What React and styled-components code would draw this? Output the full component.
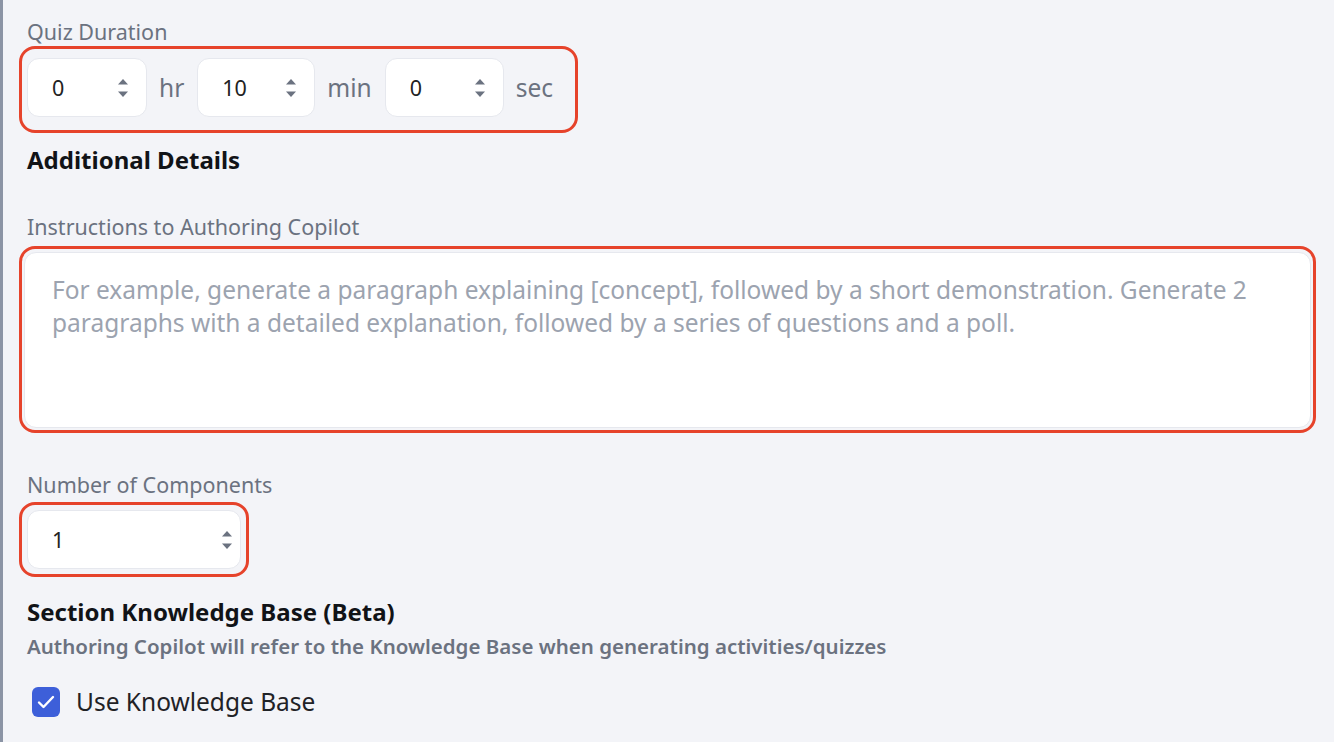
import styled, { createGlobalStyle } from 'styled-components';

const GlobalStyle = createGlobalStyle`
  html, body {
    margin: 0;
    padding: 0;
    background: #f3f4f8;
    font-family: "Noto Sans", "Open Sans", sans-serif;
  }
`;

const Shell = styled.div`
  display: flex;
  min-height: 742px;
  width: 1334px;
  overflow: hidden;
`;

const EdgeStrip = styled.div`
  width: 3px;
  flex: none;
  background: #8b94a5;
`;

const Form = styled.div`
  flex: 1;
  padding: 18px 0 0 24px;
  display: flex;
  flex-direction: column;
  align-items: flex-start;
`;

const Label = styled.div`
  font-size: 21.5px;
  line-height: 28px;
  color: #6b7280;
  margin-top: ${(p) => p.$top || 0}px;
`;

const Heading = styled.div`
  font-size: 24px;
  line-height: 30px;
  font-weight: 700;
  color: #111317;
  margin-top: ${(p) => p.$top || 0}px;
`;

const SubText = styled.div`
  font-size: 20.5px;
  line-height: 26px;
  font-weight: 600;
  color: #6b7280;
  margin-top: 6px;
`;

const Highlight = styled.div`
  margin-left: -8px;
  margin-top: ${(p) => p.$top || 0}px;
  border: 3px solid #e6432b;
  border-radius: 16px;
  padding: ${(p) => p.$pad};
  align-self: ${(p) => (p.$stretch ? 'stretch' : 'flex-start')};
  margin-right: ${(p) => (p.$stretch ? '18px' : '0')};
`;

const DurationRow = styled.div`
  display: flex;
  align-items: center;
`;

const NumberBox = styled.div`
  width: ${(p) => p.$width}px;
  height: 59px;
  box-sizing: border-box;
  background: #fff;
  border: 1px solid #e6e8ee;
  border-radius: 12px;
  display: flex;
  align-items: center;
  justify-content: space-between;
  padding: 0 ${(p) => p.$right}px 0 24px;
  font-size: 21.5px;
  color: #222;
`;

const Unit = styled.span`
  font-size: 24.5px;
  color: #6b7280;
  margin: 0 13px 0 12px;
  &:last-child {
    margin-right: 0;
  }
`;

const TextArea = styled.div`
  height: 176px;
  box-sizing: border-box;
  background: #fff;
  border: 1px solid #e6e8ee;
  border-radius: 12px;
  padding: 20px 27px;
  font-size: 24.5px;
  line-height: 33px;
  color: #9ca3af;
`;

const CheckRow = styled.label`
  display: flex;
  align-items: center;
  gap: 16px;
  margin-top: 26px;
  margin-left: 5px;
  font-size: 24.5px;
  color: #1f2226;
`;

const Box = styled.span`
  width: 28px;
  height: 30px;
  border-radius: 6px;
  background: #3d5fd9;
  display: flex;
  align-items: center;
  justify-content: center;
`;

const Spinner = () => (
  <svg width="12" height="20" viewBox="0 0 12 20">
    <path d="M1 6.5 L6 1 L11 6.5 Z" fill="#6b7280" />
    <path d="M1 13.5 L6 19 L11 13.5 Z" fill="#6b7280" />
  </svg>
);

const NumberInput = ({ value, width = 120, right = 17 }) => (
  <NumberBox $width={width} $right={right}>
    <span>{value}</span>
    <Spinner />
  </NumberBox>
);

export default function App() {
  return (
    <Shell>
      <GlobalStyle />
      <EdgeStrip />
      <Form>
        <Label>Quiz Duration</Label>
        <Highlight $pad="9px 22px 13px 5px">
          <DurationRow>
            <NumberInput value="0" />
            <Unit>hr</Unit>
            <NumberInput value="10" width={118} />
            <Unit>min</Unit>
            <NumberInput value="0" width={119} />
            <Unit>sec</Unit>
          </DurationRow>
        </Highlight>
        <Heading $top={12}>Additional Details</Heading>
        <Label $top={38}>Instructions to Authoring Copilot</Label>
        <Highlight $top={5} $pad="3px 2px 2px" $stretch>
          <TextArea>
            For example, generate a paragraph explaining [concept], followed by a short demonstration. Generate 2
            paragraphs with a detailed explanation, followed by a series of questions and a poll.
          </TextArea>
        </Highlight>
        <Label $top={38}>Number of Components</Label>
        <Highlight $top={3} $pad="5px">
          <NumberInput value="1" width={214} right={7} />
        </Highlight>
        <Heading $top={20}>Section Knowledge Base (Beta)</Heading>
        <SubText>Authoring Copilot will refer to the Knowledge Base when generating activities/quizzes</SubText>
        <CheckRow>
          <Box>
            <svg width="18" height="14" viewBox="0 0 18 14">
              <path d="M2 7.5 L6.5 12 L16 2" fill="none" stroke="#fff" strokeWidth="2.4" strokeLinecap="round" strokeLinejoin="round" />
            </svg>
          </Box>
          Use Knowledge Base
        </CheckRow>
      </Form>
    </Shell>
  );
}
